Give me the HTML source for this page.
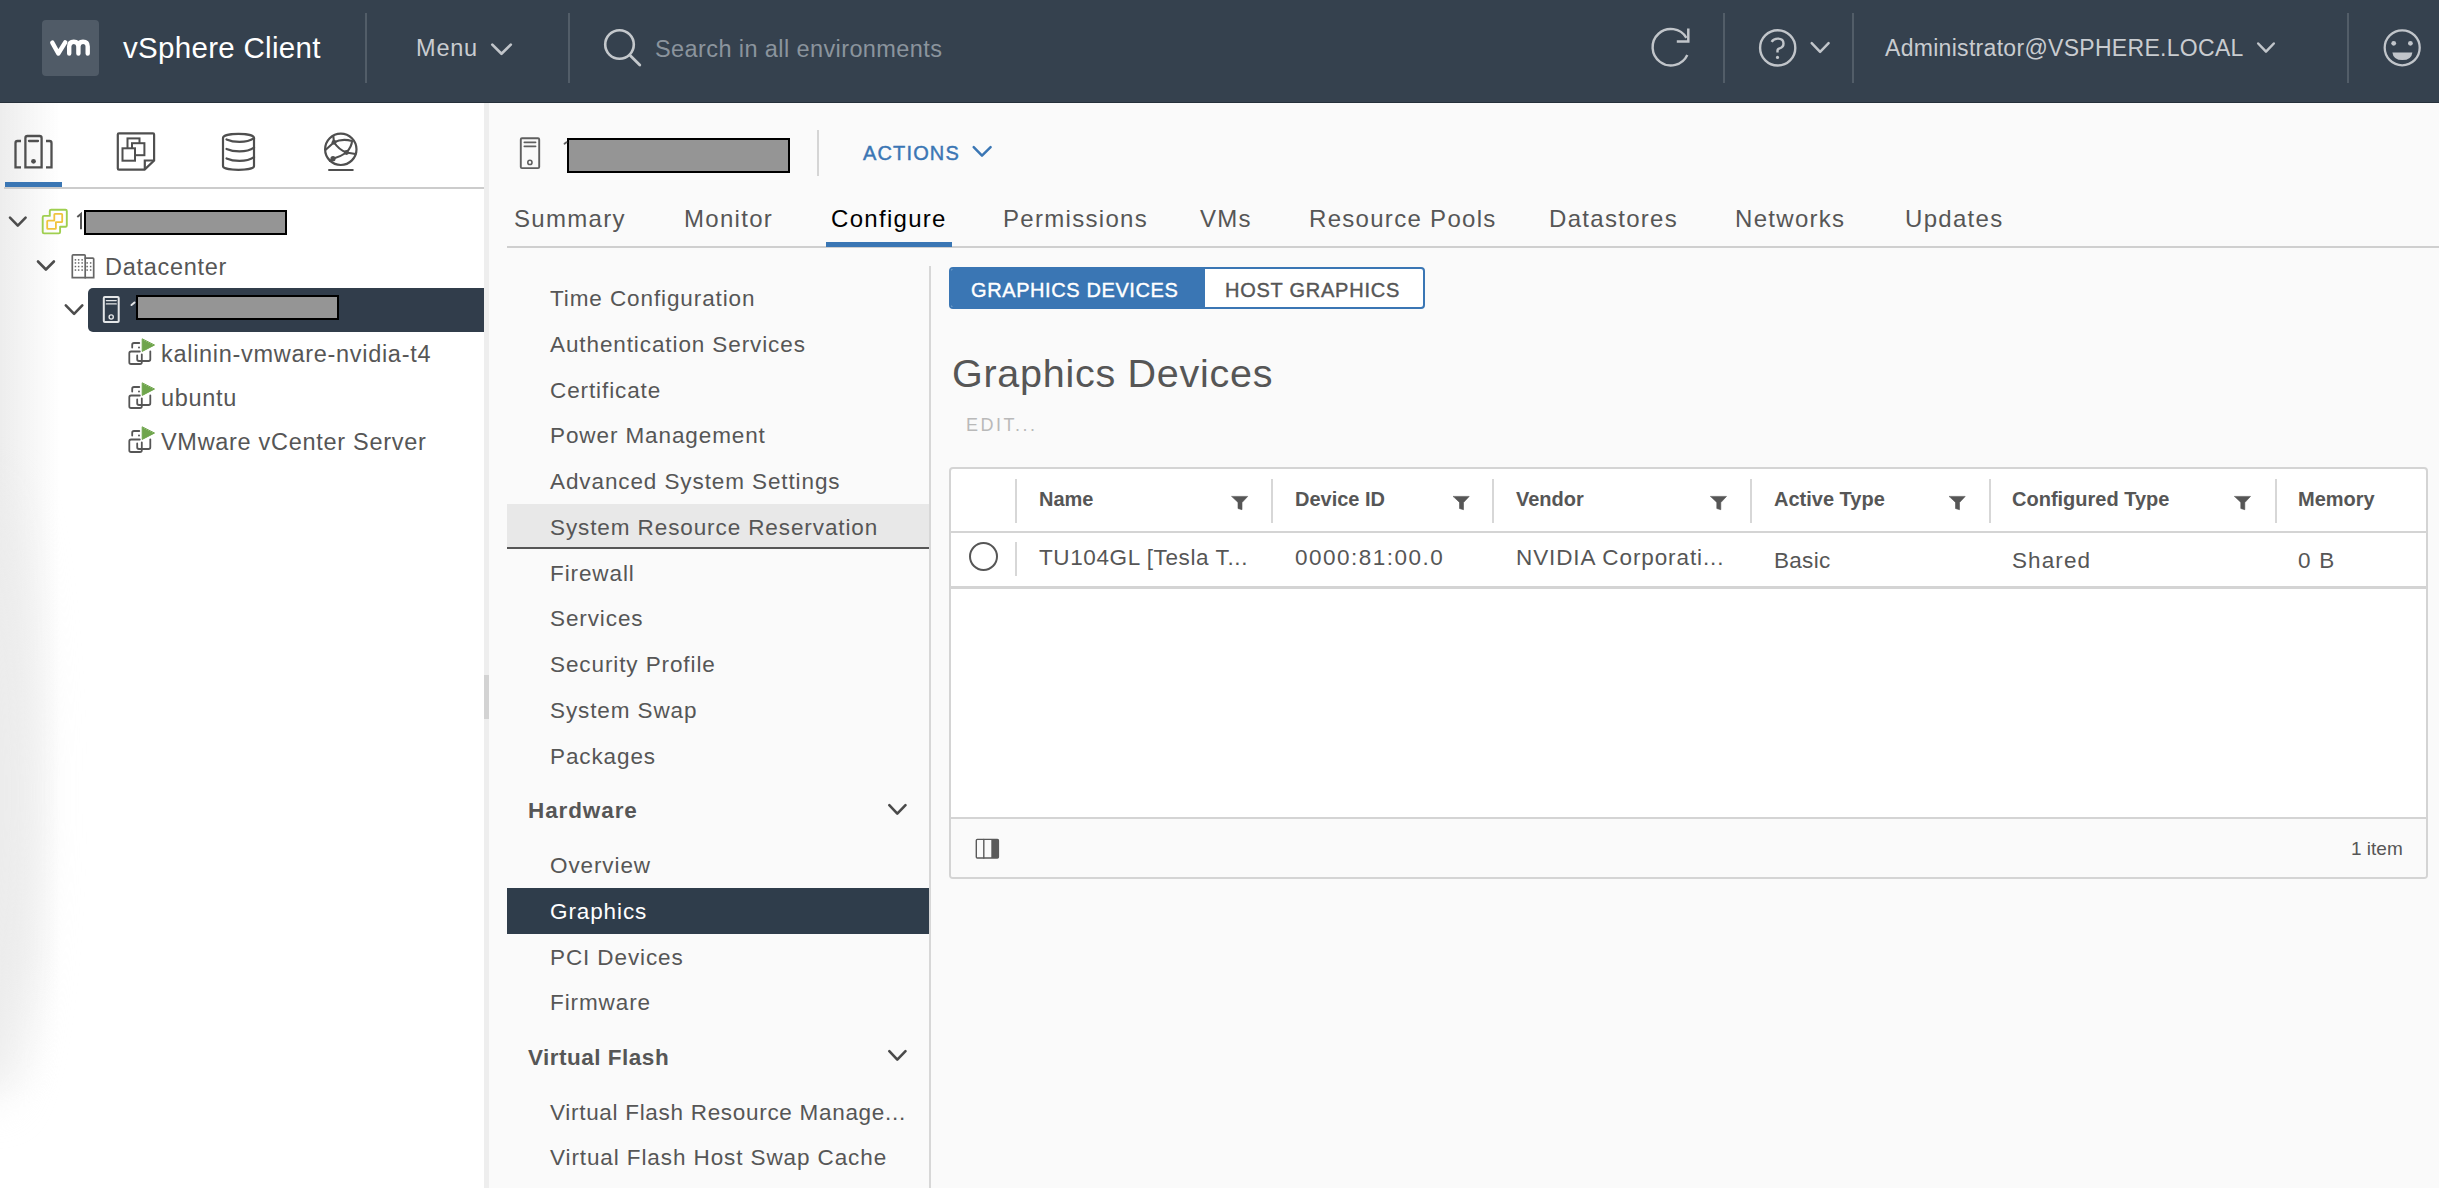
<!DOCTYPE html>
<html><head><meta charset="utf-8">
<style>
*{box-sizing:border-box;margin:0;padding:0}
html,body{width:2444px;height:1202px;overflow:hidden;background:#fff;font-family:"Liberation Sans",sans-serif;color:#565656}
.a{position:absolute;white-space:nowrap;line-height:1}
#app{position:absolute;left:0;top:0;width:2439px;height:1188px;background:#fafafa;overflow:hidden}
#hdr{position:absolute;left:0;top:0;width:2439px;height:103px;background:#35414e;border-bottom:1px solid #26303a}
.vsep{position:absolute;width:2px;background:#525d68}
#left{position:absolute;left:0;top:103px;width:484px;height:1085px;background:#fff;overflow:hidden}
#leftshade{position:absolute;left:0;top:0;width:60px;height:1085px;background:linear-gradient(to right,#ededed,rgba(255,255,255,0));-webkit-mask-image:linear-gradient(to bottom,#000 0,#000 850px,transparent 1000px)}
#leftshade2{position:absolute;left:-55px;top:380px;width:90px;height:620px;border-radius:50%;background:#ececec;filter:blur(22px)}
#split{position:absolute;left:484px;top:103px;width:5px;height:1085px;background:#eeeeee}
.hd{color:#c9ccd0}
.tab{font-size:24px;top:206.5px;color:#565656;letter-spacing:1.3px}
.cfg{font-size:22.5px;color:#565656;letter-spacing:0.9px;left:550px;margin-top:1.5px}
.tr{font-size:23.5px;color:#565656;letter-spacing:0.7px;margin-top:1.5px}
.th{font-size:20px;font-weight:700;top:489.4px;color:#565656}
.td{font-size:22.5px;top:547px;color:#565656;letter-spacing:0.3px}
.colsep{position:absolute;width:2px;background:#d7d7d7}
.filt{position:absolute;top:495px}
</style></head>
<body>
<div id="app">
  <!-- HEADER -->
  <div id="hdr">
    <div style="position:absolute;left:42px;top:20px;width:57px;height:56px;background:#505b67;border-radius:4px"></div>
        <div class="a hd" style="left:123px;top:33px;font-size:29.5px;color:#fff;letter-spacing:0.3px">vSphere Client</div>
    <div class="vsep" style="left:365px;top:13px;height:70px"></div>
    <div class="a hd" style="left:416px;top:37px;font-size:23.5px;letter-spacing:0.8px">Menu</div>
    <div class="vsep" style="left:568px;top:13px;height:70px"></div>
    <div class="a" style="left:655px;top:38px;font-size:23.5px;color:#8b949d;letter-spacing:0.4px">Search in all environments</div>
    <div class="vsep" style="left:1723px;top:13px;height:70px"></div>
    <div class="vsep" style="left:1852px;top:13px;height:70px"></div>
    <div class="a hd" style="left:1885px;top:37.2px;font-size:23px;letter-spacing:0.3px">Administrator@VSPHERE.LOCAL</div>
    <div class="vsep" style="left:2347px;top:13px;height:70px"></div>
  </div>

  <!-- LEFT PANEL -->
  <div id="left">
    <div id="leftshade"></div><div id="leftshade2"></div>
    <div style="position:absolute;left:5px;top:79px;width:57px;height:5px;background:#3a76b4"></div>
    <div style="position:absolute;left:4px;top:84px;width:480px;height:2px;background:#cccccc"></div>
  </div>
  <div id="split"></div>
  <div style="position:absolute;left:484px;top:675px;width:5px;height:44px;background:#d3d3d3"></div>

  <!-- Tree -->
  <div class="a tr" style="left:105px;top:254px">Datacenter</div>
  <div style="position:absolute;left:88px;top:288px;width:396px;height:44px;background:#313d4b;border-radius:5px 0 0 5px"></div>
  <div class="a tr" style="left:161px;top:341px">kalinin-vmware-nvidia-t4</div>
  <div class="a tr" style="left:161px;top:385px">ubuntu</div>
  <div class="a tr" style="left:161px;top:429px">VMware vCenter Server</div>

  <!-- Object header -->
  <div style="position:absolute;left:817px;top:130px;width:2px;height:46px;background:#d5d5d5"></div>
  <div class="a" style="left:863px;top:142.7px;font-size:20px;color:#3a76b4;letter-spacing:1.15px;-webkit-text-stroke:0.45px #3a76b4">ACTIONS</div>

  <!-- Tabs -->
  <div class="a tab" style="left:514px">Summary</div>
  <div class="a tab" style="left:684px">Monitor</div>
  <div class="a tab" style="left:831px;color:#000">Configure</div>
  <div class="a tab" style="left:1003px">Permissions</div>
  <div class="a tab" style="left:1200px">VMs</div>
  <div class="a tab" style="left:1309px">Resource Pools</div>
  <div class="a tab" style="left:1549px">Datastores</div>
  <div class="a tab" style="left:1735px">Networks</div>
  <div class="a tab" style="left:1905px">Updates</div>
  <div style="position:absolute;left:507px;top:246px;width:1932px;height:2px;background:#cfcfcf"></div>
  <div style="position:absolute;left:826px;top:242px;width:126px;height:5px;background:#3a76b4"></div>

  <!-- Config sidebar -->
  <div style="position:absolute;left:929px;top:266px;width:2px;height:922px;background:#d7d7d7"></div>
  <div style="position:absolute;left:507px;top:504px;width:422px;height:45px;background:#e8e8e8;border-bottom:2px solid #565656"></div>
  <div style="position:absolute;left:507px;top:888px;width:422px;height:46px;background:#2f3d4b"></div>
  <div class="a cfg" style="top:286px">Time Configuration</div>
  <div class="a cfg" style="top:332px">Authentication Services</div>
  <div class="a cfg" style="top:378px">Certificate</div>
  <div class="a cfg" style="top:423px">Power Management</div>
  <div class="a cfg" style="top:469px">Advanced System Settings</div>
  <div class="a cfg" style="top:515px">System Resource Reservation</div>
  <div class="a cfg" style="top:561px">Firewall</div>
  <div class="a cfg" style="top:606px">Services</div>
  <div class="a cfg" style="top:652px">Security Profile</div>
  <div class="a cfg" style="top:698px">System Swap</div>
  <div class="a cfg" style="top:744px">Packages</div>
  <div class="a cfg" style="top:799px;margin-top:1px;left:528px;font-weight:700;letter-spacing:0.9px">Hardware</div>
  <div class="a cfg" style="top:853px">Overview</div>
  <div class="a cfg" style="top:899px;color:#fff">Graphics</div>
  <div class="a cfg" style="top:945px">PCI Devices</div>
  <div class="a cfg" style="top:990px">Firmware</div>
  <div class="a cfg" style="top:1045px;margin-top:1.5px;left:528px;font-weight:700;letter-spacing:0.5px">Virtual Flash</div>
  <div class="a cfg" style="top:1100px;letter-spacing:0.7px">Virtual Flash Resource Manage...</div>
  <div class="a cfg" style="top:1145px">Virtual Flash Host Swap Cache</div>

  <!-- Main content -->
  <div style="position:absolute;left:949px;top:267px;width:476px;height:42px;border:2px solid #3a76b4;border-radius:4px;background:#fff;overflow:hidden">
    <div style="position:absolute;left:0;top:0;width:254px;height:100%;background:#3a76b4"></div>
  </div>
  <div class="a" style="left:971px;top:279.6px;font-size:20px;color:#fff;letter-spacing:0.6px;-webkit-text-stroke:0.4px #fff">GRAPHICS DEVICES</div>
  <div class="a" style="left:1225px;top:279.6px;font-size:20px;color:#565656;letter-spacing:0.75px;-webkit-text-stroke:0.4px #565656">HOST GRAPHICS</div>
  <div class="a" style="left:952px;top:353.6px;font-size:39.5px;color:#565656;letter-spacing:0.73px">Graphics Devices</div>
  <div class="a" style="left:966px;top:416.4px;font-size:18px;color:#b9b9b9;letter-spacing:2.5px">EDIT...</div>

  <!-- Table -->
  <div style="position:absolute;left:949px;top:467px;width:1479px;height:412px;border:2px solid #d4d4d4;border-radius:4px;background:#fff;overflow:hidden">
    <div style="position:absolute;left:0;top:62px;width:100%;height:2px;background:#d4d4d4"></div>
    <div style="position:absolute;left:0;top:117px;width:100%;height:3px;background:#d4d4d4"></div>
    <div style="position:absolute;left:0;top:348px;width:100%;height:62px;background:#fafafa;border-top:2px solid #d4d4d4"></div>
  </div>
  <div class="colsep" style="left:1015px;top:479px;height:44px"></div>
  <div class="colsep" style="left:1271px;top:479px;height:44px"></div>
  <div class="colsep" style="left:1492px;top:479px;height:44px"></div>
  <div class="colsep" style="left:1750px;top:479px;height:44px"></div>
  <div class="colsep" style="left:1989px;top:479px;height:44px"></div>
  <div class="colsep" style="left:2275px;top:479px;height:44px"></div>
  <div class="colsep" style="left:1015px;top:542px;height:34px"></div>
  <div class="a th" style="left:1039px">Name</div>
  <div class="a th" style="left:1295px">Device ID</div>
  <div class="a th" style="left:1516px">Vendor</div>
  <div class="a th" style="left:1774px">Active Type</div>
  <div class="a th" style="left:2012px">Configured Type</div>
  <div class="a th" style="left:2298px">Memory</div>
  <div style="position:absolute;left:969px;top:542px;width:29px;height:29px;border:2px solid #565656;border-radius:50%"></div>
  <div class="a td" style="left:1039px;letter-spacing:0.6px">TU104GL [Tesla T...</div>
  <div class="a td" style="left:1295px;letter-spacing:1.5px">0000:81:00.0</div>
  <div class="a td" style="left:1516px;letter-spacing:0.9px">NVIDIA Corporati...</div>
  <div class="a td" style="left:1774px;top:549.5px">Basic</div>
  <div class="a td" style="left:2012px;top:549.5px;letter-spacing:1.1px">Shared</div>
  <div class="a td" style="left:2298px;top:549.5px;letter-spacing:1.3px">0 B</div>
  <div class="a" style="left:2351px;top:839px;font-size:19px;color:#565656">1 item</div>

  <div style="position:absolute;left:84px;top:210px;width:203px;height:25px;background:#959595;border:2.2px solid #000"></div>
    <div style="position:absolute;left:136px;top:295px;width:203px;height:25px;background:#959595;border:2.2px solid #000"></div>
  <div style="position:absolute;left:567px;top:138px;width:223px;height:35px;background:#959595;border:2.2px solid #000"></div>
</div>

<svg id="ov" width="2444" height="1202" viewBox="0 0 2444 1202" style="position:absolute;left:0;top:0" fill="none" stroke-linecap="round" stroke-linejoin="round">
 <!-- header icons -->
 <path d="M52.3,42.6 L58.3,53.5 L65.2,42.4 M69.2,53.5 V46.5 Q69.2,41.8 73.8,41.8 Q78.4,41.8 78.4,46.5 V53.5 M78.4,46.5 Q78.4,41.8 83,41.8 Q87.7,41.8 87.7,46.5 V53.5" stroke="#fff" stroke-width="4.4"/>
 <path d="M492.3,44.6 L501.5,53.8 L510.8,44.6" stroke="#c1c5ca" stroke-width="2.7"/>
 <circle cx="619.5" cy="44.5" r="14.3" stroke="#c4c8cc" stroke-width="2.6"/>
 <path d="M630.2,55.5 L639.8,65" stroke="#c4c8cc" stroke-width="2.8"/>
 <path d="M1687.3,54.9 A18.2,18.2 0 1 1 1686.4,37.8" stroke="#c1c5ca" stroke-width="2.4" stroke-linecap="butt"/>
 <path d="M1688.3,28.6 V41.6 H1676.8" stroke="#c1c5ca" stroke-width="2.5" stroke-linecap="butt" stroke-linejoin="miter"/>
 <circle cx="1777.7" cy="47.9" r="17.6" stroke="#c1c5ca" stroke-width="2.4"/>
 <path d="M1771.6,41.8 Q1773.6,38.6 1777.8,38.6 Q1783.5,38.6 1783.5,43.5 Q1783.5,47.2 1779.6,48.4 Q1777.5,49 1777.5,50.8 V52.6" stroke="#c1c5ca" stroke-width="2.4" stroke-linecap="butt"/>
 <circle cx="1777.5" cy="57.4" r="1.6" fill="#c1c5ca"/>
 <path d="M1811.7,43.2 L1820.1,51.8 L1828.6,43.2" stroke="#c1c5ca" stroke-width="2.5"/>
 <path d="M2258.2,43.5 L2266,51.6 L2273.8,43.5" stroke="#c1c5ca" stroke-width="2.5"/>
 <circle cx="2402.2" cy="47.8" r="17.5" stroke="#c1c5ca" stroke-width="2.3"/>
 <circle cx="2393.7" cy="43.3" r="2.4" fill="#c1c5ca"/>
 <circle cx="2410.4" cy="43.3" r="2.4" fill="#c1c5ca"/>
 <path d="M2392.4,52.4 H2412.4 Q2411.5,60 2402.4,60 Q2393.3,60 2392.4,52.4 Z" fill="#c1c5ca"/>

 <!-- left nav icons -->
 <g stroke="#4f4f4f" stroke-width="2.3">
  <path d="M21,141 H17.5 Q15.5,141 15.5,143 V167.3 H21" stroke-linecap="butt" stroke-linejoin="miter"/>
  <path d="M25.4,167.3 V138 Q25.4,136 27.4,136 H39.6 Q41.6,136 41.6,138 V167.3 Z" stroke-linejoin="miter"/>
  <path d="M29,141 H38"/>
  <path d="M46,141 H49.5 Q51.5,141 51.5,143 V167.3 H46" stroke-linecap="butt" stroke-linejoin="miter"/>
 </g>
 <circle cx="33.5" cy="161.3" r="2.4" fill="#4f4f4f"/>
 <g stroke="#4f4f4f" stroke-width="2.2" stroke-linejoin="miter" stroke-linecap="butt">
  <path d="M117.8,134.6 Q117.8,133.4 119,133.4 H153 Q154.1,133.4 154.1,134.6 V160.5 L144.6,169.6 H119 Q117.8,169.6 117.8,168.4 Z"/>
  <path d="M154.1,160.5 H144.8 V169.6"/>
  <rect x="127.5" y="138.4" width="12" height="12" fill="#fff" stroke-width="2"/>
  <rect x="132" y="143.2" width="12.4" height="12" fill="#fff" stroke-width="2"/>
  <rect x="122.5" y="148.3" width="12.5" height="12.4" fill="#fff" stroke-width="2"/>
 </g>
 <g stroke="#4f4f4f" stroke-width="2.2">
  <path d="M223,138 C223,135.3 231,133.9 238.5,133.9 C246,133.9 254,135.3 254,138 V166 C254,168.6 246,169.8 238.5,169.8 C231,169.8 223,168.6 223,166 Z"/>
  <path d="M226.5,139.4 C231,141.4 236,141.9 239.5,141.9 C245,141.9 250.5,140.6 254,138.2"/>
  <path d="M226.5,148.9 C231,150.9 236,151.4 239.5,151.4 C245,151.4 250.5,150.1 254,147.7"/>
  <path d="M226.5,158.4 C231,160.4 236,160.9 239.5,160.9 C245,160.9 250.5,159.6 254,157.2"/>
 </g>
 <g stroke="#4f4f4f" stroke-width="2.2">
  <circle cx="340.8" cy="149.3" r="15.7"/>
  <path d="M329.1,170 H352.7"/>
  <path d="M333.3,136 L334,142.3 L326,149.5 M334,142.3 Q342,138.3 352,141 M334,142.3 Q339,150 346.5,152.5 Q352,146 352,141 M346.5,152.5 L355.5,154 M346.5,152.5 Q340,157 333,158.7 L330,161" stroke-width="2.1"/>
 </g>
 <circle cx="334" cy="142.3" r="2.4" fill="#4f4f4f"/>
 <circle cx="346.5" cy="152.5" r="2.4" fill="#4f4f4f"/>
 <circle cx="333" cy="158.7" r="2.6" fill="#4f4f4f"/>

 <!-- tree -->
 <path d="M77.3,217 L81,213.9 V229.3" stroke="#565656" stroke-width="2" stroke-linecap="butt" stroke-linejoin="miter"/>
 <g stroke="#4d4d4d" stroke-width="2.6">
  <path d="M10,217.7 L17.8,225.6 L25.6,217.7"/>
  <path d="M38,261.5 L45.9,269.5 L53.9,261.5"/>
  <path d="M65.8,305.4 L74.1,313.8 L82.3,305.4"/>
 </g>
 <path d="M49.8,215.9 V211 Q49.8,209.7 51.1,209.7 H65.5 Q66.8,209.7 66.8,211 V225.4 Q66.8,226.7 65.5,226.7 H60.1 V232.1 Q60.1,233.4 58.8,233.4 H44 Q42.7,233.4 42.7,232.1 V217.2 Q42.7,215.9 44,215.9 Z" stroke="#9fcf4f" stroke-width="1.9"/>
 <path d="M54.3,220.6 V214.6 Q54.3,213.9 55,213.9 H61.5 Q62.2,213.9 62.2,214.6 V221.5 Q62.2,222.2 61.5,222.2 H55.9 V228.2 Q55.9,228.9 55.2,228.9 H47.9 Q47.2,228.9 47.2,228.2 V221.3 Q47.2,220.6 47.9,220.6 Z" stroke="#f0c43c" stroke-width="1.8"/>
 <g stroke="#666" stroke-width="1.7" stroke-linejoin="miter">
  <path d="M72.3,277.7 V255.8 Q72.3,254.9 73.2,254.9 H84.3 Q85.2,254.9 85.2,255.8 V277.7 Z"/>
  <path d="M85.2,258.1 H92.8 Q93.7,258.1 93.7,259 V277.7 H85.2"/>
 </g>
 <g fill="#666">
  <rect x="74.7" y="259.1" width="1.5" height="1.5"/><rect x="77.9" y="259.1" width="1.5" height="1.5"/><rect x="81.4" y="259.1" width="1.5" height="1.5"/>
  <rect x="74.7" y="262.2" width="1.5" height="1.5"/><rect x="77.9" y="262.2" width="1.5" height="1.5"/><rect x="81.4" y="262.2" width="1.5" height="1.5"/>
  <rect x="74.7" y="265.8" width="1.5" height="1.5"/><rect x="77.9" y="265.8" width="1.5" height="1.5"/><rect x="81.4" y="265.8" width="1.5" height="1.5"/>
  <rect x="74.7" y="269.3" width="1.5" height="1.5"/><rect x="77.9" y="269.3" width="1.5" height="1.5"/><rect x="81.4" y="269.3" width="1.5" height="1.5"/>
  <rect x="86.4" y="262.2" width="1.5" height="1.5"/><rect x="89.9" y="262.2" width="1.5" height="1.5"/>
  <rect x="86.4" y="265.8" width="1.5" height="1.5"/><rect x="89.9" y="265.8" width="1.5" height="1.5"/>
  <rect x="86.4" y="269.3" width="1.5" height="1.5"/><rect x="89.9" y="269.3" width="1.5" height="1.5"/>
 </g>
 <!-- selected host icon -->
 <g stroke="#e4e6e8">
  <rect x="103.8" y="297" width="14.9" height="25" rx="1" stroke-width="2"/>
  <path d="M106.4,300.6 H116.2 M106.4,303.9 H116.2" stroke-width="1.4"/>
  <circle cx="111.2" cy="317" r="2.1" stroke-width="1.4"/>
 </g>
 <path d="M131.5,305 L134.5,302.5" stroke="#e4e6e8" stroke-width="2"/>
 <!-- VM icons -->
 <g id="vmi">
  <g stroke="#565656" stroke-width="1.8">
   <path d="M139.8,351.5 H131.1 Q129.3,351.5 129.3,353.3 V362.2 Q129.3,364 131.1,364 H140 Q141.8,364 141.8,362.2 V354.3"/>
   <path d="M139.3,343 H134 Q132.2,343 132.2,344.8 V347.5"/>
   <path d="M137.2,355.5 V359.3 Q137.2,361 139,361 H148.6 Q150.3,361 150.3,359.3 V351.3"/>
  </g>
  <circle cx="139" cy="347.6" r="1" fill="#565656"/>
  <path d="M142.2,339.2 L142.2,351.4 L154.2,345.2 Z" fill="#6fa54c" stroke="#6fa54c" stroke-width="1"/>
 </g>
 <use href="#vmi" y="44"/>
 <use href="#vmi" y="88"/>

 <!-- object header host icon -->
 <g stroke="#5f5f5f">
  <rect x="520.8" y="138.3" width="18.4" height="29.8" rx="1.2" stroke-width="1.9"/>
  <path d="M524.3,142.4 H535.6 M524.3,146.4 H535.6" stroke-width="1.6"/>
  <circle cx="529.9" cy="162.4" r="2.1" stroke-width="1.6"/>
 </g>
 <path d="M564.5,143.8 L566.5,142.3" stroke="#5f5f5f" stroke-width="1.8"/>
 <path d="M973.7,147.2 L982,155.6 L990.6,147.2" stroke="#3a76b4" stroke-width="2.5"/>

 <!-- sidebar chevrons -->
 <path d="M889.3,805.1 L897.3,813.6 L905.5,805.1" stroke="#4a4a4a" stroke-width="2.6"/>
 <path d="M889.3,1051.1 L897.3,1059.6 L905.5,1051.1" stroke="#4a4a4a" stroke-width="2.6"/>

 <!-- filter icons -->
 <g fill="#565656" stroke="#565656" stroke-width="0.6">
  <path id="flt" d="M1231.9,496.4 H1247.7 L1242,502.6 V509.7 L1238,508.5 V502.6 Z"/>
  <use href="#flt" x="221.5"/>
  <use href="#flt" x="478.8"/>
  <use href="#flt" x="717.5"/>
  <use href="#flt" x="1002.8"/>
 </g>
 <!-- column toggle -->
 <g stroke="#5a5a5a" stroke-width="1.4">
  <rect x="976.3" y="839.4" width="22.1" height="18.6" rx="1"/>
  <path d="M983.8,839.4 V858"/>
 </g>
 <rect x="991.3" y="839.4" width="7.1" height="18.6" fill="#5a5a5a"/>
</svg>
</body></html>
